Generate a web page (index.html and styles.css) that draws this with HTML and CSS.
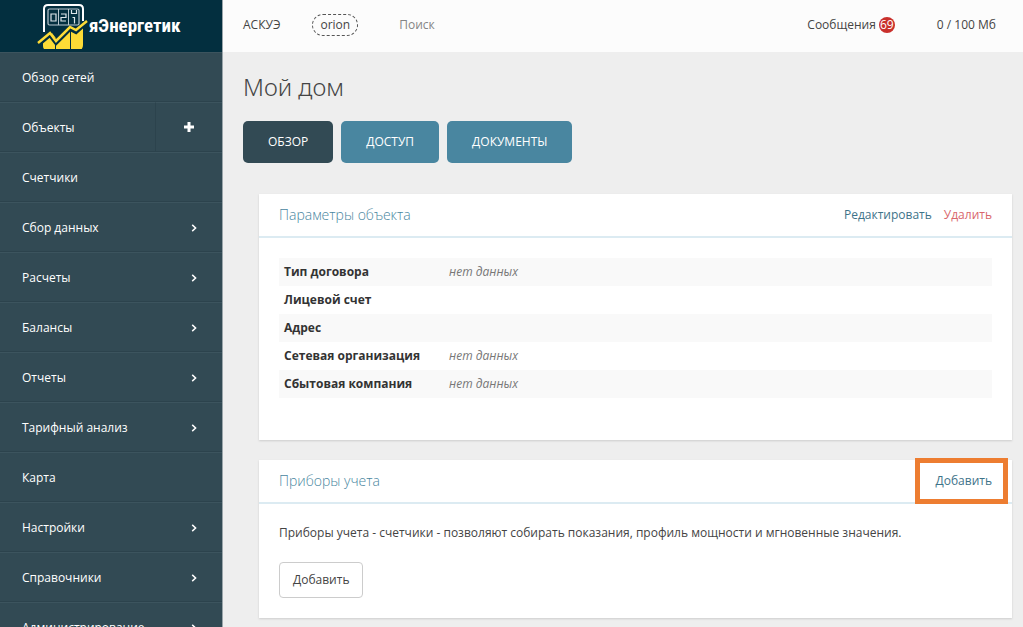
FILE: index.html
```html
<!DOCTYPE html>
<html lang="ru">
<head>
<meta charset="utf-8">
<meta name="viewport" content="width=device-width, initial-scale=1">
<title>Мой дом — яЭнергетик</title>
<link rel="stylesheet" href="styles.css">
</head>
<body>
<svg class="sprite" aria-hidden="true">
  <symbol id="chevron" viewBox="0 0 6 8"><path d="M1.2 .9 4.6 4 1.2 7.1" fill="none" stroke="currentColor" stroke-width="1.5"/></symbol>
</svg>
<div class="app">
  <aside class="sidebar">
    <a class="brand" href="#">
      <svg class="brand-mark" viewBox="0 0 52 46" aria-hidden="true">
        <path d="M7 29V6q0-4 4-4h31q4 0 4 4v12" fill="none" stroke="#fff" stroke-width="2"/>
        <rect x="11" y="6" width="31" height="16" rx="1.500" fill="none" stroke="#b9c8cf" stroke-width="1.200"/>
        <path d="M21.500 6v16M31.500 6v16" stroke="#b9c8cf"/>
        <path d="M14 11h5v7h-5zM24 11h5v3.500h-5v3.500h5M34.500 7v3.500h5V7M35.500 14.500h2v6" fill="none" stroke="#dce5e9" stroke-width="1.200"/>
        <path d="M6 42V38l9-8 6 8 14-13 5 3 6-7v21q0 5-4 5H10q-4 0-4-4z" fill="#fddb36"/>
        <path d="M18.500 35v11M33.500 28v18" stroke="#032f3f" stroke-width="1"/>
        <path d="m1 42 12-10 6 8 14-14 6 3 9-8" fill="none" stroke="#032f3f" stroke-width="4"/>
        <path d="m1 40 12-10 6 8 14-14 6 3 11-9" fill="none" stroke="#fddb36" stroke-width="2.500"/>
      </svg>
      <span class="brand-name">яЭнергетик</span>
    </a>
    <nav class="menu">
      <a class="menu-item" href="#">Обзор сетей</a>
      <div class="menu-split">
        <a class="menu-item" href="#">Объекты</a>
        <button class="menu-add" type="button" aria-label="Добавить объект"><svg class="plus" viewBox="0 0 10 10" aria-hidden="true"><path d="M5 0v10M0 5h10" stroke="currentColor" stroke-width="3"/></svg></button>
      </div>
      <a class="menu-item" href="#">Счетчики</a>
      <a class="menu-item" href="#">Сбор данных<svg class="chevron"><use href="#chevron"/></svg></a>
      <a class="menu-item" href="#">Расчеты<svg class="chevron"><use href="#chevron"/></svg></a>
      <a class="menu-item" href="#">Балансы<svg class="chevron"><use href="#chevron"/></svg></a>
      <a class="menu-item" href="#">Отчеты<svg class="chevron"><use href="#chevron"/></svg></a>
      <a class="menu-item" href="#">Тарифный анализ<svg class="chevron"><use href="#chevron"/></svg></a>
      <a class="menu-item" href="#">Карта</a>
      <a class="menu-item" href="#">Настройки<svg class="chevron"><use href="#chevron"/></svg></a>
      <a class="menu-item" href="#">Справочники<svg class="chevron"><use href="#chevron"/></svg></a>
      <a class="menu-item" href="#">Администрирование<svg class="chevron"><use href="#chevron"/></svg></a>
    </nav>
  </aside>
  <div class="page">
    <header class="topbar">
      <a class="top-link" href="#">АСКУЭ</a>
      <a class="top-link tag" href="#">orion</a>
      <input class="search" type="search" placeholder="Поиск" aria-label="Поиск">
      <a class="top-link messages" href="#">Сообщения <span class="count">69</span></a>
      <span class="quota">0 / 100 Мб</span>
    </header>
    <main class="content">
      <h1 class="title">Мой дом</h1>
      <nav class="tabs">
        <a class="tab tab-active" href="#">ОБЗОР</a>
        <a class="tab" href="#">ДОСТУП</a>
        <a class="tab" href="#">ДОКУМЕНТЫ</a>
      </nav>
      <section class="card">
        <header class="card-head">
          <h2 class="card-title">Параметры объекта</h2>
          <a class="action" href="#">Редактировать</a>
          <a class="action danger" href="#">Удалить</a>
        </header>
        <div class="card-body params-body">
          <table class="params">
            <tr><th scope="row">Тип договора</th><td>нет данных</td></tr>
            <tr><th scope="row">Лицевой счет</th><td></td></tr>
            <tr><th scope="row">Адрес</th><td></td></tr>
            <tr><th scope="row">Сетевая организация</th><td>нет данных</td></tr>
            <tr><th scope="row">Сбытовая компания</th><td>нет данных</td></tr>
          </table>
        </div>
      </section>
      <section class="card">
        <header class="card-head">
          <h2 class="card-title">Приборы учета</h2>
          <a class="action marked" href="#">Добавить</a>
        </header>
        <div class="card-body">
          <p class="note">Приборы учета - счетчики - позволяют собирать показания, профиль мощности и мгновенные значения.</p>
          <button class="button" type="button">Добавить</button>
        </div>
      </section>
    </main>
  </div>
</div>
</body>
</html>
```
FILE: styles.css
```css
* { box-sizing: border-box; }
body {
  margin: 0;
  background: #eee;
  color: #444;
  font: 12px/20px "Open Sans", "Noto Sans", sans-serif;
}
a { color: inherit; text-decoration: none; }
button, input { font: inherit; color: inherit; }
.sprite { display: none; }
.app { display: flex; height: 100vh; overflow: hidden; }

.sidebar {
  flex: 0 0 223px;
  overflow: hidden;
  background: #324a54;
  border-right: 1px solid #9aa5aa;
  color: #fff;
}
.brand {
  display: flex;
  align-items: center;
  height: 52px;
  padding-left: 37px;
  background: #032f3f;
}
.brand-mark { width: 52px; height: 46px; }
.brand-name {
  font: bold 19px/30px "Liberation Sans Narrow", "Roboto Condensed", "DejaVu Sans Condensed", sans-serif;
  white-space: nowrap;
}
.menu-item {
  flex: 1;
  display: flex;
  align-items: center;
  justify-content: space-between;
  height: 50px;
  padding: 2px 25px 0 22px;
  border-top: 1px solid #3c545e;
  border-bottom: 1px solid #2c434d;
}
.menu-split { display: flex; }
.menu-add {
  display: grid;
  place-items: center;
  width: 67px;
  padding: 0;
  background: none;
  border: solid;
  border-width: 1px 0 1px 1px;
  border-color: #3c545e #2c434d #2c434d;
}
.menu-add { color: #fff; }
.plus { width: 10px; height: 10px; }
.chevron { width: 6px; height: 8px; }

.page { flex: 1; min-width: 0; overflow: hidden; }
.topbar {
  display: flex;
  align-items: center;
  height: 52px;
  padding: 0 27px 2px 20px;
  background: #fcfcfc;
}
.tag {
  margin: 0 37px 0 32px;
  padding: 0 7px;
  border: 1px dashed #555;
  border-radius: 11px;
}
.search {
  flex: 1;
  min-width: 0;
  padding: 0 4px;
  border: 0;
  outline: 0;
  background: none;
}
.search::placeholder { color: #858585; opacity: 1; }
.messages { display: flex; align-items: center; gap: 3px; }
.count {
  width: 16px;
  height: 16px;
  border-radius: 50%;
  background: #c9302c;
  color: #fff;
  line-height: 16px;
  display: flex;
  justify-content: center;
}
.quota { margin-left: 42px; }

.content { padding: 18px 11px 8px 20px; }
.title {
  margin: 0 0 17px;
  font-family: "Noto Sans", "Open Sans", sans-serif;
  font-size: 24px;
  font-weight: 300;
  line-height: 34px;
}
.tabs { display: flex; gap: 8px; margin-bottom: 31px; }
.tab {
  padding: 11px 25px;
  border-radius: 5px;
  background: #4986a0;
  color: #fff;
}
.tab-active { background: #324a54; }

.card {
  margin: 0 0 20px 16px;
  background: #fff;
  box-shadow: 0 1px 2px #ccc;
}
.card-head {
  display: flex;
  align-items: center;
  gap: 12px;
  height: 44px;
  padding: 0 20px;
  border-bottom: 2px solid #dcebf2;
}
.card-title {
  flex: 1;
  margin: 0;
  color: #4986a0;
  font-size: 14px;
  font-weight: 300;
}
.action { color: #3e7389; }
.danger { color: #d9666c; }
.marked {
  margin-right: -16px;
  padding: 8px 11px 8px 16px;
  border: 5px solid #ed7d31;
}
.card-body { padding: 19px 20px 20px; }
.params-body { padding: 20px 20px 42px; }
.params { width: 100%; border-collapse: collapse; }
.params tr { height: 28px; }
.params tr:nth-child(odd) { background: #f9f9f9; }
.params th {
  width: 165px;
  padding: 4px 5px;
  color: #333;
  text-align: left;
}
.params td { padding: 4px 5px; color: #777; font-style: italic; }
.note { margin: 0 0 19px; }
.button {
  display: block;
  padding: 7px 13px;
  background: #fff;
  border: 1px solid #ccc;
  border-radius: 4px;
}
```
